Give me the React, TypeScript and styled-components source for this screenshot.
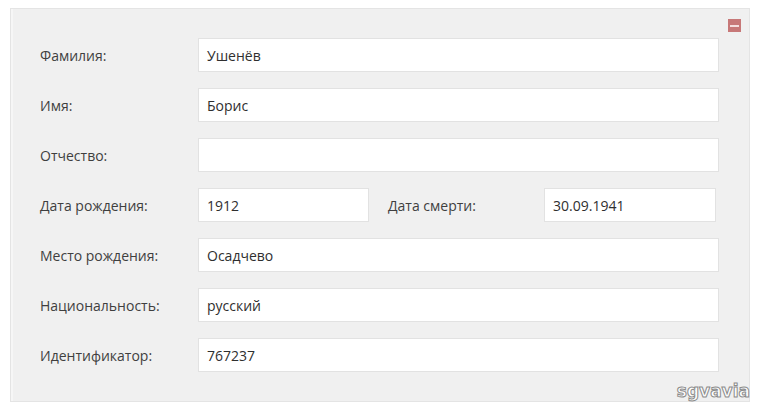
import styled, { createGlobalStyle } from "styled-components";

const GlobalStyle = createGlobalStyle`
    html, body {
        margin: 0;
        padding: 0;
        background: #ffffff;
    }
    body {
        font-family: "Open Sans", "Noto Sans", Arial, sans-serif;
    }
`;

const Page = styled.div`
    position: relative;
    width: 761px;
    height: 411px;
    padding: 8px 0 0 10px;
    box-sizing: border-box;
`;

const Panel = styled.div`
    position: relative;
    width: 740px;
    height: 394px;
    box-sizing: border-box;
    background: #f0f0f0;
    border: 1px solid #e4e4e4;
    box-shadow: inset 2px 0 0 #f6f6f6;
    padding: 29px 30px 0 29px;
    display: flex;
    flex-direction: column;
    gap: 16px;
`;

const Collapse = styled.div`
    position: absolute;
    top: 10px;
    right: 8px;
    width: 13px;
    height: 13px;
    background: #c77878;
    display: flex;
    align-items: center;
    justify-content: center;

    &::after {
        content: "";
        width: 9px;
        height: 2px;
        background: #f4dede;
    }
`;

const Row = styled.div`
    display: flex;
    align-items: center;
    height: 34px;
`;

const Label = styled.label<{ $width?: number }>`
    width: ${(p) => p.$width ?? 158}px;
    flex-shrink: 0;
    font-size: 14px;
    color: #3f3f3f;
`;

const Field = styled.div<{ $width?: number }>`
    width: ${(p) => (p.$width ? `${p.$width}px` : "521px")};
    height: 34px;
    box-sizing: border-box;
    background: #ffffff;
    border: 1px solid #e2e2e2;
    padding: 0 8px;
    display: flex;
    align-items: center;
    font-size: 14px;
    color: #2f2f2f;
`;

const Gap = styled.div`
    width: 19px;
`;

const Watermark = styled.div`
    position: absolute;
    right: 11px;
    bottom: 10px;
    font-family: "DejaVu Sans", Verdana, sans-serif;
    font-size: 17px;
    font-weight: bold;
    letter-spacing: 0;
    color: #ffffff;
    -webkit-text-stroke: 1px #8c8c8c;
`;

interface IRow {
    label: string;
    value: string;
}

const rows: IRow[] = [
    { label: "Фамилия:", value: "Ушенёв" },
    { label: "Имя:", value: "Борис" },
    { label: "Отчество:", value: "" },
];

const rowsAfter: IRow[] = [
    { label: "Место рождения:", value: "Осадчево" },
    { label: "Национальность:", value: "русский" },
    { label: "Идентификатор:", value: "767237" },
];

function App() {
    return (
        <>
            <GlobalStyle />
            <Page>
                <Panel>
                    <Collapse />
                    {rows.map((r) => (
                        <Row key={r.label}>
                            <Label>{r.label}</Label>
                            <Field>{r.value}</Field>
                        </Row>
                    ))}
                    <Row>
                        <Label>Дата рождения:</Label>
                        <Field $width={171}>1912</Field>
                        <Gap />
                        <Label $width={156}>Дата смерти:</Label>
                        <Field $width={172}>30.09.1941</Field>
                    </Row>
                    {rowsAfter.map((r) => (
                        <Row key={r.label}>
                            <Label>{r.label}</Label>
                            <Field>{r.value}</Field>
                        </Row>
                    ))}
                </Panel>
                <Watermark>sgvavia</Watermark>
            </Page>
        </>
    );
}

export default App;
